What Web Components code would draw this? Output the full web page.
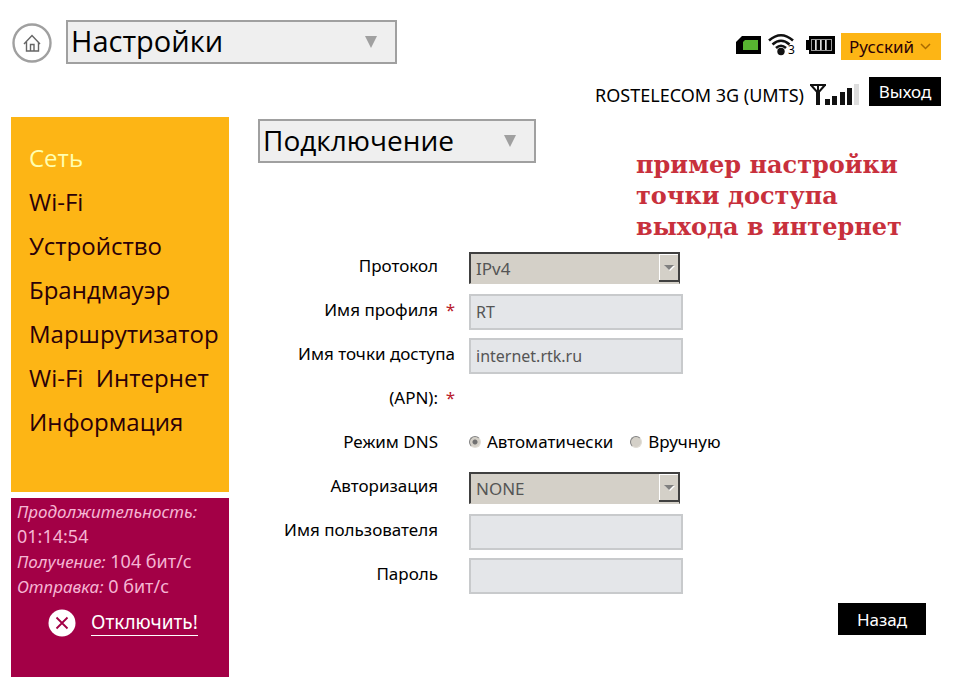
<!DOCTYPE html>
<html lang="ru">
<head>
<meta charset="utf-8">
<title>Настройки</title>
<style>
   body {
      margin: 0;
      background: #fff;
      color: #000;
      font: 17px/25px "Noto Sans", sans-serif;
   }
</style>
</head>
<body>
<router-page>
   <router-header slot="header"></router-header>
   <side-menu slot="side">
      <a href="#network" class="active">Сеть</a>
      <a href="#wifi">Wi-Fi</a>
      <a href="#device">Устройство</a>
      <a href="#firewall">Брандмауэр</a>
      <a href="#router">Маршрутизатор</a>
      <a href="#internet">Wi-Fi&nbsp; Интернет</a>
      <a href="#info">Информация</a>
   </side-menu>
   <connection-status slot="side"></connection-status>
   <section-head>
      <title-select label="Раздел"><option>Подключение</option></title-select>
      <span slot="note">пример настройки<br>точки доступа<br>выхода в интернет</span>
   </section-head>
   <select-field label="Протокол"><option>IPv4</option></select-field>
   <text-field label="Имя профиля" value="RT" required></text-field>
   <text-field label="Имя точки доступа|(APN):" value="internet.rtk.ru" required></text-field>
   <radio-field label="Режим DNS" options="Автоматически|Вручную"></radio-field>
   <select-field label="Авторизация"><option>NONE</option></select-field>
   <text-field label="Имя пользователя"></text-field>
   <text-field label="Пароль" type="password"></text-field>
   <black-button slot="footer">Назад</black-button>
</router-page>

<script>
class BaseElement extends HTMLElement {

   $(selector) {
      return this.shadowRoot.querySelector(selector)
   }

   constructor(html) {
      super();
      const template = document.createElement('template');
      template.innerHTML = html;
      this.attachShadow({ mode: 'open' }).appendChild(template.content.cloneNode(true));
   }

   // options can't be slotted into a select, so they are copied
   copyOptions() {
      const select = this.$('select');
      this.querySelectorAll('option').forEach(option => {
         select.appendChild(option.cloneNode(true));
      });
   }
}

customElements.define('router-page', class RouterPage extends BaseElement {
   constructor() {
      super(`
<style>
   :host { display: block; padding: 20px 20px 18px 11px; }
   .body { display: grid; grid-template-columns: 218px 1fr; gap: 29px; align-items: start; }
   aside { display: grid; gap: 6px; }
   footer { display: flex; justify-content: flex-end; padding: 7px 15px 0 0; }
</style>
<header><slot name="header"></slot></header>
<div class="body">
   <aside><slot name="side"></slot></aside>
   <main>
      <slot></slot>
      <footer><slot name="footer"></slot></footer>
   </main>
</div>`);
   }
});

customElements.define('title-select', class TitleSelect extends BaseElement {
   constructor() {
      super(`
<style>
   :host { display: grid; width: 278px; font-size: 28px; }
   select, svg { grid-area: 1 / 1; }
   select {
      appearance: none;
      width: 100%;
      height: 44px;
      margin: 0;
      padding: 0 3px 2px;
      border: 2px solid #a0a0a0;
      border-radius: 0;
      background: #efefef;
      color: #000;
      font-family: "Open Sans", "Noto Sans", sans-serif;
      font-size: inherit;
      line-height: 38px;
   }
   svg { place-self: center end; margin-right: 20px; pointer-events: none; }
</style>
<select></select>
<svg width="12" height="12" viewBox="0 0 12 12"><path d="M0 0h12L6 12z" fill="#a0a0a0"/></svg>`);
   }

   connectedCallback() {
      this.$('select').setAttribute('aria-label', this.getAttribute('label'));
      this.copyOptions();
   }
});

customElements.define('black-button', class BlackButton extends BaseElement {
   constructor() {
      super(`
<style>
   :host { display: block; width: 88px; height: 32px; }
   button {
      width: 100%;
      height: 100%;
      padding: 0;
      border: 0;
      background: #000;
      color: #fff;
      font: inherit;
   }
</style>
<button type="button"><slot></slot></button>`);
   }
});

customElements.define('router-header', class RouterHeader extends BaseElement {
   constructor() {
      super(`
<style>
   :host { display: flex; justify-content: space-between; min-height: 97px; }
   .left { display: flex; align-items: flex-start; gap: 13px; }
   .left svg { display: block; }
   .left title-select { width: 331px; font-size: 29px; }
   .right { display: grid; gap: 17px; padding-top: 13px; align-content: start; justify-items: end; }
   .icons { display: flex; align-items: flex-start; gap: 6px; }
   .icons > svg { margin-top: 3px; }
   .icons > .wifi { display: flex; width: 32px; align-items: flex-start; }
   .wifi span { margin: 10px 0 0 -6px; font-size: 12px; line-height: 14px; }
   .network { display: flex; align-items: flex-end; gap: 6px; }
   .network span { font-size: 18px; line-height: 21px; }
   .network black-button { width: 72px; height: 29px; margin-left: 4px; }
   .language { display: grid; width: 100px; height: 27px; }
   .language select, .language svg { grid-area: 1 / 1; }
   .language select {
      appearance: none;
      padding: 0 8px;
      margin: 0;
      border: 0;
      border-radius: 0;
      background: #fdb515;
      color: #2a0008;
      font: inherit;
   }
   .language svg { place-self: center end; margin-right: 10px; pointer-events: none; }
</style>
<div class="left">
   <a href="#home" aria-label="Домой">
      <svg width="42" height="46" viewBox="0 0 42 46" fill="none">
         <circle cx="21" cy="23" r="18.500" stroke="#a0a0a0" stroke-width="2.400"/>
         <path d="M13 24l8-8.500 8 8.500M15.500 22v9h12v-9M19.500 31v-6.500h3.500V31" stroke="#666" stroke-width="1.400"/>
      </svg>
   </a>
   <title-select label="Меню"><option>Настройки</option></title-select>
</div>
<div class="right">
   <div class="icons">
      <svg width="26" height="18" viewBox="0 0 26 18">
         <path d="M6 0h19v18H0V6z" fill="#000"/>
         <path d="M9 4h13v10H7V6z" fill="#58b531"/>
      </svg>
      <div class="wifi">
         <svg width="26" height="23" viewBox="0 0 26 23">
            <g fill="none" stroke="#111" stroke-width="2.600">
               <path d="M1 7.500Q13-3 25 7.500"/>
               <path d="M4.500 11.500q8.500-7.500 17 0"/>
               <path d="M8 15q5-4.500 10 0"/>
            </g>
            <circle cx="13" cy="18.500" r="3.700" fill="#111"/>
         </svg>
         <span>3</span>
      </div>
      <svg width="29" height="18" viewBox="0 0 29 18">
         <path d="M3 0h26v18H3v-4H0V4h3z" fill="#000"/>
         <path d="M5 3h21v12H5z" fill="#999"/>
         <path d="M6 4h3v10H6zM11 4h3v10h-3zM16 4h3v10h-3zM21 4h4v10h-4z" fill="#000"/>
         <path d="M9 4h1v10H9zM14 4h1v10h-1zM19 4h1v10h-1z" fill="#ddd"/>
      </svg>
      <div class="language">
         <select aria-label="Язык"><option>Русский</option></select>
         <svg width="11" height="7" viewBox="0 0 11 7"><path d="M1 1l4.500 4.500L10 1" fill="none" stroke="#a86b00" stroke-width="1.500"/></svg>
      </div>
   </div>
   <div class="network">
      <span>ROSTELECOM 3G (UMTS)</span>
      <svg width="49" height="22" viewBox="0 0 49 22">
         <path d="M0 1h16M1 1l7 8 7-8M8 1v20" fill="none" stroke="#111" stroke-width="2"/>
         <path d="M6 8h4v13H6zM15 15h5v6h-5zM22 12h5v9h-5zM30 8h5v13h-5zM37 4h5v17h-5z" fill="#111"/>
         <path d="M44 0h5v21h-5z" fill="#ddd"/>
      </svg>
      <black-button>Выход</black-button>
   </div>
</div>`);
   }
});

customElements.define('side-menu', class SideMenu extends BaseElement {
   constructor() {
      super(`
<style>
   :host { display: block; }
   nav {
      display: flex;
      flex-direction: column;
      padding: 19px 0 48px 18px;
      background: #fdb515;
      font: 24px/44px "Open Sans", "Noto Sans", sans-serif;
   }
   ::slotted(a) { color: #2a0008; text-decoration: none; white-space: nowrap; }
   ::slotted(a.active) { color: #ffffb0; }
</style>
<nav><slot></slot></nav>`);
   }
});

customElements.define('connection-status', class ConnectionStatus extends BaseElement {
   constructor() {
      super(`
<style>
   :host { display: block; padding: 1px 6px 40px; background: #a30046; color: #f5b5d3; }
   p { margin: 0; font-size: 18px; }
   i { font-size: 17px; }
   .disconnect { display: flex; align-items: center; gap: 15px; padding: 10px 0 0 31px; }
   svg { display: block; }
   a {
      border-bottom: 1px solid #fff;
      color: #fff;
      font-size: 19px;
      text-decoration: none;
   }
</style>
<p><i>Продолжительность:</i><br>01:14:54</p>
<p><i>Получение:</i> 104 бит/с</p>
<p><i>Отправка:</i> 0 бит/с</p>
<div class="disconnect">
   <svg width="28" height="28" viewBox="0 0 28 28">
      <circle cx="14" cy="14" r="13.500" fill="#fff"/>
      <path d="M8.500 8.500l11 11M19.500 8.500l-11 11" stroke="#a30046" stroke-width="1.800"/>
   </svg>
   <a href="#disconnect">Отключить!</a>
</div>`);
   }
});

customElements.define('section-head', class SectionHead extends BaseElement {
   constructor() {
      super(`
<style>
   :host { display: flex; align-items: flex-start; gap: 100px; padding: 2px 0; }
   p {
      margin: 30px 0 0;
      color: #c8303c;
      font: bold 24px/31px "DejaVu Serif", serif;
      white-space: nowrap;
   }
</style>
<slot></slot>
<p><slot name="note"></slot></p>`);
   }
});

const fieldStyle = `
<style>
   :host { display: grid; grid-template-columns: 197px 1fr; column-gap: 14px; line-height: 44px; }
   .label { text-align: right; white-space: nowrap; }
   .mark { display: inline-block; width: 17px; color: #b8202c; }
   .control { display: flex; align-items: center; box-sizing: border-box; height: 44px; padding-top: 4px; }
</style>`;

// "|" in the label starts a new line
function labelHtml(el) {
   const text = el.getAttribute('label').replace('|', '<br>');
   return text + '<span class="mark">' + (el.hasAttribute('required') ? '*' : '') + '</span>';
}

customElements.define('text-field', class TextField extends BaseElement {
   constructor() {
      super(`${fieldStyle}
<style>
   input {
      box-sizing: border-box;
      width: 214px;
      height: 36px;
      margin: 0;
      padding: 0 5px;
      border: 2px solid #c8cacc;
      border-radius: 0;
      background: #e4e6e9;
      color: #555;
      font: inherit;
      font-size: 16px;
      line-height: 25px;
   }
</style>
<label class="label" for="input"></label>
<div class="control"><input id="input" disabled></div>`);
   }

   connectedCallback() {
      this.$('label').innerHTML = labelHtml(this);
      this.$('input').type = this.getAttribute('type') || 'text';
      this.$('input').value = this.getAttribute('value') || '';
   }
});

customElements.define('select-field', class SelectField extends BaseElement {
   constructor() {
      super(`${fieldStyle}
<style>
   .box { display: grid; width: 211px; height: 32px; }
   select, svg { grid-area: 1 / 1; }
   select {
      appearance: none;
      margin: 0;
      padding: 0 5px;
      border: 1px solid #404040;
      border-width: 2px 1px 1px 2px;
      border-bottom-color: #d4d0c8;
      border-radius: 0;
      background: #d4d0c8;
      color: #555;
      font: inherit;
      line-height: 25px;
      opacity: 1;
   }
   svg { place-self: center end; pointer-events: none; }
</style>
<label class="label" for="select"></label>
<div class="control">
   <div class="box">
      <select id="select" disabled></select>
      <svg width="21" height="28" viewBox="0 0 21 28">
         <path d="M0 0h21v28H0z" fill="#404040"/>
         <path d="M0 0h19v26H0z" fill="#fff"/>
         <path d="M1 1h18v25H1z" fill="#d4d0c8"/>
         <path d="M6 12h10l-5 5z" fill="#fff"/>
         <path d="M5 11h10l-5 5z" fill="#808080"/>
      </svg>
   </div>
</div>`);
   }

   connectedCallback() {
      this.$('label').innerHTML = labelHtml(this);
      this.copyOptions();
   }
});

customElements.define('radio-field', class RadioField extends BaseElement {
   constructor() {
      super(`${fieldStyle}
<style>
   .control { gap: 17px; padding-top: 0; white-space: nowrap; }
   .control label { display: flex; align-items: center; gap: 6px; }
   input {
      appearance: none;
      box-sizing: border-box;
      width: 12px;
      height: 12px;
      margin: 0;
      border: 1px solid;
      border-color: #808080 #e0ddd6 #e0ddd6 #808080;
      border-radius: 50%;
      background: #d4d0c8;
   }
   input:checked { background: radial-gradient(circle, #707070 2px, #d4d0c8 3px); }
</style>
<div class="label" id="label"></div>
<div class="control" role="radiogroup" aria-labelledby="label"></div>`);
   }

   connectedCallback() {
      this.$('.label').innerHTML = labelHtml(this);
      this.$('.control').innerHTML = this.getAttribute('options').split('|').map((name, i) =>
         `<label><input type="radio" name="mode" disabled ${i === 0 ? 'checked' : ''}>${name}</label>`
      ).join('');
   }
});
</script>
</body>
</html>
